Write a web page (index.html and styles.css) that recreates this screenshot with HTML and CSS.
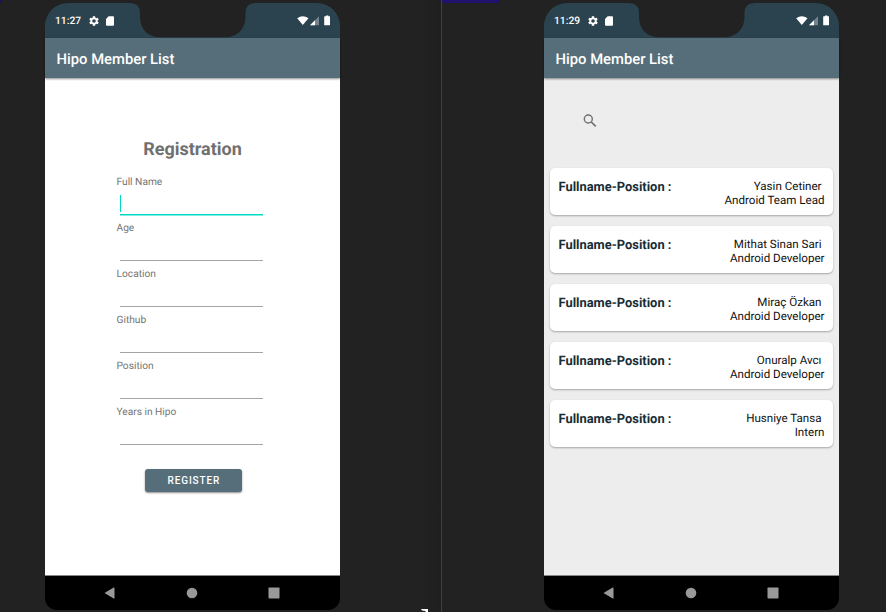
FILE: index.html
```html
<!DOCTYPE html>
<html lang="en">
<head>
<meta charset="utf-8">
<title>Hipo Member List</title>
<link rel="stylesheet" href="styles.css">
</head>
<body>
<svg class="defs" width="0" height="0" aria-hidden="true">
  <symbol id="frame" viewBox="0 0 295 35"><path fill="#2b434e" d="M0 35V23A23 23 0 0 1 23 0H85Q95 0 95 10V14C95 26 103 34.3 115 34.3H180C192 34.3 200.500 26 200.500 14V10Q200.500 0 210.500 0H272A23 23 0 0 1 295 23V35Z"/></symbol>
  <symbol id="gear" viewBox="2 2 20 20"><path fill="#fff" d="M19.140 12.940c.04-.3.060-.61.060-.94s-.02-.64-.07-.94l2.030-1.580a.5.5 0 0 0 .12-.61l-1.920-3.320a.5.5 0 0 0-.59-.22l-2.390.96a7 7 0 0 0-1.620-.94l-.36-2.540a.5.5 0 0 0-.48-.41h-3.840a.5.5 0 0 0-.47.41l-.36 2.540a7 7 0 0 0-1.620.94l-2.390-.96a.5.5 0 0 0-.59.22L2.740 8.870a.5.5 0 0 0 .12.610l2.030 1.580a6 6 0 0 0 0 1.880l-2.030 1.580a.5.5 0 0 0-.12.610l1.920 3.320c.12.220.37.290.59.220l2.390-.96c.5.380 1.030.700 1.620.940l.36 2.540c.05.240.24.410.48.410h3.840c.24 0 .44-.17.470-.41l.36-2.540a7 7 0 0 0 1.620-.94l2.390.96c.22.080.47 0 .59-.22l1.920-3.320a.5.5 0 0 0-.12-.61zM12 15.600A3.600 3.600 0 1 1 12 8.400a3.600 3.600 0 0 1 0 7.200z"/></symbol>
  <symbol id="card" viewBox="0 0 8 10"><path fill="#fff" d="M2.700.2H7Q8 .2 8 1.200V8.800Q8 9.800 7 9.800H1Q0 9.800 0 8.800V3Z"/></symbol>
  <symbol id="signals" viewBox="0 0 34 12"><path fill="#fff" d="M.2 3.300Q5.800-1 11.500 3.300L5.800 10Z"/><path fill="#fff" opacity=".35" d="M22 1.300V10.300H13Z"/><path fill="#fff" d="M18 5.300V10.300H13Z"/><path fill="#fff" d="M27.800 1.300H29V.5H31.400V1.300H32.600Q33 1.300 33 1.800V9.800Q33 10.300 32.500 10.300H27.700Q27.200 10.300 27.200 9.800V1.800Q27.200 1.300 27.800 1.300Z"/></symbol>
  <symbol id="back" viewBox="0 0 12 12"><path fill="#999" d="M.5 6L9.700.5Q10.500.2 10.500 1V11Q10.500 11.800 9.700 11.500Z"/></symbol>
  <symbol id="home" viewBox="0 0 12 12"><circle cx="6" cy="6" r="5.300" fill="#999"/></symbol>
  <symbol id="recent" viewBox="0 0 12 12"><rect x=".5" y=".5" width="11" height="11" rx=".7" fill="#999"/></symbol>
</svg>
<main class="desk">
  <section class="pane pane-left">
    <div class="phone">
      <header class="status">
        <svg class="status-bg"><use href="#frame"/></svg>
        <span class="clock">11:27</span>
        <svg class="gear"><use href="#gear"/></svg>
        <svg class="sd"><use href="#card"/></svg>
        <svg class="signals"><use href="#signals"/></svg>
      </header>
      <h1 class="appbar">Hipo Member List</h1>
      <div class="screen form-screen">
        <h2 class="heading">Registration</h2>
        <form class="form">
          <div class="field focused"><span class="label">Full Name</span><i class="input"></i></div>
          <div class="field"><span class="label">Age</span><i class="input"></i></div>
          <div class="field"><span class="label">Location</span><i class="input"></i></div>
          <div class="field"><span class="label">Github</span><i class="input"></i></div>
          <div class="field"><span class="label">Position</span><i class="input"></i></div>
          <div class="field"><span class="label">Years in Hipo</span><i class="input"></i></div>
        </form>
        <button class="register" type="button">REGISTER</button>
      </div>
      <nav class="nav">
        <svg><use href="#back"/></svg><svg><use href="#home"/></svg><svg><use href="#recent"/></svg>
      </nav>
    </div>
    <svg class="corner" viewBox="0 0 8 3"><path fill="#fff" d="M0 0H7V3H4.500V2L1 1.500Z"/></svg>
  </section>
  <section class="pane pane-right">
    <div class="phone">
      <header class="status">
        <svg class="status-bg"><use href="#frame"/></svg>
        <span class="clock">11:29</span>
        <svg class="gear"><use href="#gear"/></svg>
        <svg class="sd"><use href="#card"/></svg>
        <svg class="signals"><use href="#signals"/></svg>
      </header>
      <h1 class="appbar">Hipo Member List</h1>
      <div class="screen list-screen">
        <svg class="search" viewBox="0 0 14 14"><g fill="none" stroke="#707070"><circle cx="5.300" cy="5" r="4" stroke-width="1.400"/><path d="M8.300 8L12.700 12.400" stroke-width="1.700"/></g></svg>
        <div class="members">
          <article class="member"><b>Fullname-Position :</b><p><span class="name">Yasin Cetiner</span><span>Android Team Lead</span></p></article>
          <article class="member"><b>Fullname-Position :</b><p><span class="name">Mithat Sinan Sari</span><span>Android Developer</span></p></article>
          <article class="member"><b>Fullname-Position :</b><p><span class="name">Miraç Özkan</span><span>Android Developer</span></p></article>
          <article class="member"><b>Fullname-Position :</b><p><span class="name">Onuralp Avcı</span><span>Android Developer</span></p></article>
          <article class="member"><b>Fullname-Position :</b><p><span class="name">Husniye Tansa</span><span>Intern</span></p></article>
        </div>
      </div>
      <nav class="nav">
        <svg><use href="#back"/></svg><svg><use href="#home"/></svg><svg><use href="#recent"/></svg>
      </nav>
    </div>
  </section>
</main>
</body>
</html>
```
FILE: styles.css
```css
* { box-sizing: border-box; }
body { margin: 0; background: #222; font-family: Roboto, sans-serif; overflow: hidden; text-rendering: geometricPrecision; }
h1, h2, p { margin: 0; }
.defs { position: absolute; }
.desk { display: grid; grid-template-columns: 441px 445px; height: 612px; }
.pane { position: relative; padding-top: 3px; }
.pane-left { padding-left: 45px; background: linear-gradient(90deg, #222 420px, #1f1f1f 441px); }
.pane-left::before { content: ""; position: absolute; left: 0; top: 0; width: 2px; height: 3px; background: #1c1259; border-bottom-right-radius: 3px; }
.pane-right { padding-left: 102px; border-left: 1px solid #404040; }
.pane-right::before { content: ""; position: absolute; left: 0; top: 0; width: 58px; height: 3px; background: #21116a; }
.corner { position: absolute; left: 421px; top: 609px; width: 8px; height: 3px; }
.phone { width: 295px; height: 607px; display: grid; grid-template-rows: 35px 40px 498px 34px; }
.status { position: relative; display: flex; align-items: center; padding: 0 9px 0 10px; }
.status-bg { position: absolute; left: 0; top: 0; width: 295px; height: 35px; }
.clock { position: relative; width: 34px; padding-top: 1px; color: #fff; font-size: 10.3px; font-weight: 500; line-height: 12px; }
.gear { position: relative; width: 10px; height: 10px; }
.sd { position: relative; width: 8px; height: 10px; margin-left: 6.5px; }
.signals { position: relative; width: 34px; height: 12px; margin-left: auto; }
.appbar { position: relative; z-index: 1; padding-left: 11.5px; background: #566e7a; color: #fff; font-size: 14.8px; font-weight: 500; line-height: 42px; box-shadow: 0 1px 2px rgba(0,0,0,.45); }
.screen { border-bottom: 1px solid #888; }
.form-screen { background: #fff; padding: 61px 72px 0; }
.heading { width: 151px; text-align: center; color: #707070; font-size: 18px; font-weight: 700; line-height: 22px; }
.form { margin-top: 16px; }
.field { height: 46px; color: #757575; }
.label { display: block; margin-left: -.5px; font-size: 10.2px; line-height: 12px; }
.input { display: block; width: 143.5px; height: 26px; margin-left: 2.5px; border-bottom: 1px solid #a4a4a4; }
.focused .input { border-bottom: 1px solid #00dac5; box-shadow: 0 .5px 0 #00dac5; padding-top: 6px; }
.focused .input::before { content: ""; display: block; width: 1.5px; height: 17px; background: #00dac5; }
.register { display: block; width: 97px; height: 23px; margin: 16px 0 0 28.4px; padding: 0; border: 0; border-radius: 3px; background: #566e7a; color: #fff; font: 500 10px/23px Roboto, sans-serif; letter-spacing: .9px; box-shadow: 0 1px 2px rgba(0,0,0,.45); }
.list-screen { background: #ededed; padding: 36px 6px 0; }
.search { display: block; width: 14px; height: 14px; margin-left: 33px; }
.members { display: grid; gap: 11px; margin-top: 40px; }
.member { display: flex; justify-content: space-between; height: 47px; padding: 10px 8.5px 0 8.5px; background: #fff; border-radius: 5px; box-shadow: 0 1px 2px rgba(0,0,0,.3); color: #182d36; font-size: 12.9px; line-height: 19px; }
.member p { display: grid; align-content: start; padding-top: 2px; color: #111; font-size: 11.6px; line-height: 13.5px; text-align: right; }
.name { padding-right: 3px; }
.nav { display: flex; align-items: center; justify-content: center; gap: 70px; padding-right: 1px; background: #000; border-radius: 0 0 12px 12px; }
.nav svg { width: 12px; height: 12px; }
```
